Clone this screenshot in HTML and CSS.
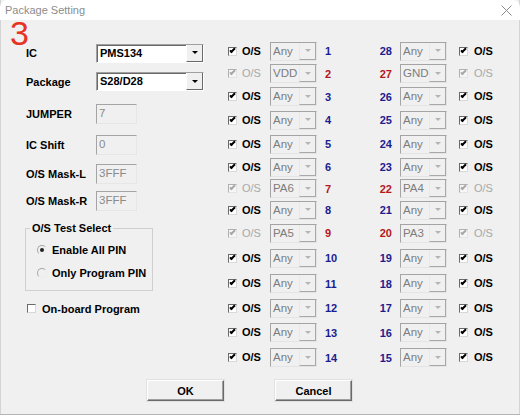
FILE: index.html
```html
<!DOCTYPE html>
<html lang="en">
<head>
  <meta charset="UTF-8">
  <title>Package Setting</title>
  <link rel="stylesheet" href="styles.css">
</head>
<body>
  <div class="window">
    <div class="titlebar">
      <span class="title">Package Setting</span>
      <svg class="close" width="11" height="11" viewBox="0 0 11 11"><path d="M0.5 0.5l10 10M10.5 0.5l-10 10"/></svg>
    </div>

    <div class="content">
      <div class="main">
        <div class="side">
          <div class="fields">
            <span>IC</span>
            <div class="combo live"><span class="val">PMS134</span><span class="drop"></span></div>
            <span>Package</span>
            <div class="combo live"><span class="val">S28/D28</span><span class="drop"></span></div>
            <span>JUMPER</span>
            <div class="tbox">7</div>
            <span>IC Shift</span>
            <div class="tbox">0</div>
            <span>O/S Mask-L</span>
            <div class="tbox">3FFF</div>
            <span>O/S Mask-R</span>
            <div class="tbox">3FFF</div>
          </div>

          <fieldset class="group">
            <legend>O/S Test Select</legend>
            <div class="radio on"><span class="dot"></span>Enable All PIN</div>
            <div class="radio"><span class="dot"></span>Only Program PIN</div>
          </fieldset>

          <div class="check-row"><span class="cb"></span>On-board Program</div>
        </div>

        <!-- pin table: left side pins 1-14, right side pins 28-15 -->
        <div class="pins">
          <span class="cb on"></span><span class="os">O/S</span><div class="combo"><span class="val">Any</span><span class="drop"></span></div><span class="num">1</span>
          <span class="num r">28</span><div class="combo"><span class="val">Any</span><span class="drop"></span></div><span class="cbcell"><span class="cb on"></span></span><span class="os">O/S</span>

          <span class="cb on off"></span><span class="os off">O/S</span><div class="combo"><span class="val">VDD</span><span class="drop"></span></div><span class="num pwr">2</span>
          <span class="num r pwr">27</span><div class="combo"><span class="val">GND</span><span class="drop"></span></div><span class="cbcell"><span class="cb on off"></span></span><span class="os off">O/S</span>

          <span class="cb on"></span><span class="os">O/S</span><div class="combo"><span class="val">Any</span><span class="drop"></span></div><span class="num">3</span>
          <span class="num r">26</span><div class="combo"><span class="val">Any</span><span class="drop"></span></div><span class="cbcell"><span class="cb on"></span></span><span class="os">O/S</span>

          <span class="cb on"></span><span class="os">O/S</span><div class="combo"><span class="val">Any</span><span class="drop"></span></div><span class="num">4</span>
          <span class="num r">25</span><div class="combo"><span class="val">Any</span><span class="drop"></span></div><span class="cbcell"><span class="cb on"></span></span><span class="os">O/S</span>

          <span class="cb on"></span><span class="os">O/S</span><div class="combo"><span class="val">Any</span><span class="drop"></span></div><span class="num">5</span>
          <span class="num r">24</span><div class="combo"><span class="val">Any</span><span class="drop"></span></div><span class="cbcell"><span class="cb on"></span></span><span class="os">O/S</span>

          <span class="cb on"></span><span class="os">O/S</span><div class="combo"><span class="val">Any</span><span class="drop"></span></div><span class="num">6</span>
          <span class="num r">23</span><div class="combo"><span class="val">Any</span><span class="drop"></span></div><span class="cbcell"><span class="cb on"></span></span><span class="os">O/S</span>

          <span class="cb on off"></span><span class="os off">O/S</span><div class="combo"><span class="val">PA6</span><span class="drop"></span></div><span class="num pwr">7</span>
          <span class="num r pwr">22</span><div class="combo"><span class="val">PA4</span><span class="drop"></span></div><span class="cbcell"><span class="cb on off"></span></span><span class="os off">O/S</span>

          <span class="cb on"></span><span class="os">O/S</span><div class="combo"><span class="val">Any</span><span class="drop"></span></div><span class="num">8</span>
          <span class="num r">21</span><div class="combo"><span class="val">Any</span><span class="drop"></span></div><span class="cbcell"><span class="cb on"></span></span><span class="os">O/S</span>

          <span class="cb on off"></span><span class="os off">O/S</span><div class="combo"><span class="val">PA5</span><span class="drop"></span></div><span class="num pwr">9</span>
          <span class="num r pwr">20</span><div class="combo"><span class="val">PA3</span><span class="drop"></span></div><span class="cbcell"><span class="cb on off"></span></span><span class="os off">O/S</span>

          <span class="cb on"></span><span class="os">O/S</span><div class="combo"><span class="val">Any</span><span class="drop"></span></div><span class="num">10</span>
          <span class="num r">19</span><div class="combo"><span class="val">Any</span><span class="drop"></span></div><span class="cbcell"><span class="cb on"></span></span><span class="os">O/S</span>

          <span class="cb on"></span><span class="os">O/S</span><div class="combo"><span class="val">Any</span><span class="drop"></span></div><span class="num">11</span>
          <span class="num r">18</span><div class="combo"><span class="val">Any</span><span class="drop"></span></div><span class="cbcell"><span class="cb on"></span></span><span class="os">O/S</span>

          <span class="cb on"></span><span class="os">O/S</span><div class="combo"><span class="val">Any</span><span class="drop"></span></div><span class="num">12</span>
          <span class="num r">17</span><div class="combo"><span class="val">Any</span><span class="drop"></span></div><span class="cbcell"><span class="cb on"></span></span><span class="os">O/S</span>

          <span class="cb on"></span><span class="os">O/S</span><div class="combo"><span class="val">Any</span><span class="drop"></span></div><span class="num">13</span>
          <span class="num r">16</span><div class="combo"><span class="val">Any</span><span class="drop"></span></div><span class="cbcell"><span class="cb on"></span></span><span class="os">O/S</span>

          <span class="cb on"></span><span class="os">O/S</span><div class="combo"><span class="val">Any</span><span class="drop"></span></div><span class="num">14</span>
          <span class="num r">15</span><div class="combo"><span class="val">Any</span><span class="drop"></span></div><span class="cbcell"><span class="cb on"></span></span><span class="os">O/S</span>
        </div>
      </div>

      <div class="buttons">
        <button>OK</button>
        <button>Cancel</button>
      </div>
    </div>

    <span class="mark">3</span>
  </div>
</body>
</html>
```

FILE: styles.css
```css
body {
  margin: 0;
  font-family: "Liberation Sans", Arial, sans-serif;
  font-size: 11px;
  font-weight: bold;
  color: #000;
}

.window {
  position: relative;
  width: 520px; height: 415px;
  box-sizing: border-box;
  background: #f0f0f0;
  border-bottom: 1px solid #b4b4b4;
  box-shadow: inset 1px 0 #d4d4d4, inset -1px 0 #d4d4d4;
  overflow: hidden;
}

/* title bar */
.titlebar {
  position: relative;
  height: 20px;
  background: #fff;
  border-radius: 7px 7px 0 0;
}
.title {
  display: block;
  padding-left: 5px;
  line-height: 20px;
  font-size: 11px; font-weight: normal;
  color: #8c8c8c;
}
.close {
  position: absolute; top: 5px; right: 8px;
  stroke: #8a8a8a; stroke-width: 1; fill: none;
}

.mark {
  position: absolute; left: 10px; top: 16px;
  font-size: 34px; font-weight: normal; line-height: 34px;
  color: #e63323;
}

.content { padding-top: 20px; }
.main { display: flex; padding-left: 26px; }

/* left side */
.side { width: 179px; }
.fields {
  display: grid;
  grid-template-columns: 70px auto;
  grid-template-rows: 26px 31px 33px 30px 27px 27px;
  align-items: center;
}

.combo {
  display: flex;
  width: 47px; height: 19px;
  box-sizing: border-box;
  border: 1px solid;
  border-color: #a4a4a4 #e4e4e4 #e4e4e4 #a4a4a4;
  background: #f0f0f0;
}
.combo .val {
  flex: 1;
  padding-left: 2px;
  line-height: 16px;
  font-weight: normal; font-size: 11.5px;
  color: #7c7c7c;
}
.combo .drop {
  display: flex; align-items: center; justify-content: center;
  width: 15px;
  border-left: 1px solid #e8e8e8;
  border-right: 1px solid #a8a8a8;
  border-bottom: 1px solid #a8a8a8;
}
.combo .drop::after {
  content: '';
  border-top: 3px solid #b4b4b4;
  border-left: 3px solid transparent;
  border-right: 3px solid transparent;
}

.combo.live {
  width: 108px;
  background: #fff;
  border-color: #a0a0a0 #fff #fff #a0a0a0;
  box-shadow: inset 1px 1px #696969;
}
.combo.live .val {
  padding-left: 3px;
  font-weight: bold; font-size: 11px;
  line-height: 17px;
  color: #000;
}
.combo.live .drop {
  background: #f0f0f0;
  border-left: 1px solid #fff;
  border-right-color: #696969;
  border-bottom-color: #696969;
}
.combo.live .drop::after { border-top-color: #000; }

.tbox {
  width: 41px; height: 20px;
  box-sizing: border-box;
  padding: 1px 2px;
  border: 1px solid;
  border-color: #a4a4a4 #e6e6e6 #e6e6e6 #a4a4a4;
  font-weight: normal; font-size: 11.5px;
  line-height: 14px;
  color: #8a8a8a;
}

.group {
  width: 128px;
  box-sizing: border-box;
  margin: 8px 0 0 -1px;
  padding: 7px 0 9px 0;
  border: 1px solid #cfcfcf;
}
.group legend {
  margin-left: 4px;
  padding: 0 2px;
  line-height: 13px;
}
.radio {
  display: flex; align-items: center; gap: 5px;
  height: 16px;
  margin-left: 11px;
}
.radio + .radio { margin-top: 7px; }
.dot {
  display: flex; align-items: center; justify-content: center;
  width: 10px; height: 10px;
  box-sizing: border-box;
  border: 1px solid;
  border-color: #a8a8a8 #ececec #ececec #a8a8a8;
  border-radius: 50%;
}
.radio.on .dot::after {
  content: '';
  width: 4px; height: 4px;
  border-radius: 50%;
  background: #222;
}

.check-row {
  display: flex; align-items: center; gap: 6px;
  height: 13px;
  margin: 11px 0 0 1px;
}

/* checkbox */
.cb {
  position: relative;
  display: inline-block;
  width: 9px; height: 9px;
  box-sizing: border-box;
  border: 1px solid;
  border-color: #6a6a6a #d8d8d8 #d8d8d8 #6a6a6a;
  background: #fff;
}
.cb.on::after {
  content: '';
  position: absolute; left: 2px; top: -1px;
  width: 1px; height: 4px;
  border: solid #000;
  border-width: 0 2px 2px 0;
  transform: rotate(45deg);
}
.cb.off {
  border-color: #b0b0b0 #e4e4e4 #e4e4e4 #b0b0b0;
  background: #f6f6f6;
}
.cb.off::after { border-color: #a8a8a8; }

/* pin table */
.pins {
  margin-left: 23px;
  display: grid;
  grid-template-columns: 14px 28px 47px 28px 55px 47px 27px auto;
  grid-template-rows: 22px 23px 23px 24px 24px 22px 21px 22px 24px 26px 25px 24px 25px 25px;
  align-items: center;
}
.os { line-height: 13px; }
.os.off { color: #a8a8a8; font-weight: normal; }
.num {
  padding-left: 8px;
  color: #1c1c8e;
}
.num.r { padding: 0 8px 0 0; text-align: right; }
.num.pwr { color: #b3161c; }
.cbcell { display: flex; padding-left: 12px; }

/* dialog buttons */
.buttons {
  display: flex; gap: 51px;
  margin-top: 10px;
  padding-left: 147px;
}
.buttons button {
  width: 77px; height: 21px;
  padding: 0;
  font: bold 11px "Liberation Sans", Arial, sans-serif;
  background: #f0f0f0;
  border: 1px solid;
  border-color: #fff #6a6a6a #6a6a6a #fff;
  box-shadow: inset -1px -1px #a0a0a0, 0 0 0 1px #e2e2e2;
}
```
